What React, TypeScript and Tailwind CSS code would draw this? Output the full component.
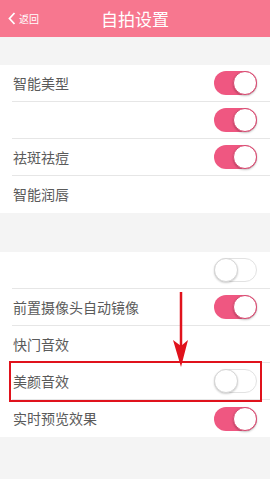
import React from "react";

const font = { fontFamily: '"Noto Sans CJK SC", "Noto Sans", sans-serif' };

function Toggle({ on }: { on: boolean }) {
  return on ? (
    <div className="relative w-[43px] h-[24px] rounded-full bg-[#ef5781]">
      <div className="absolute right-0 top-0 w-[24px] h-[24px] rounded-full bg-white border border-[#d8486f] shadow-[0_1px_2px_rgba(0,0,0,0.25)]" />
    </div>
  ) : (
    <div className="relative w-[43px] h-[24px] rounded-full bg-white border border-[#e2e2e2]">
      <div className="absolute left-[-1px] top-[-1px] w-[24px] h-[24px] rounded-full bg-white border border-[#d6d6d6] shadow-[0_1px_2px_rgba(0,0,0,0.2)]" />
    </div>
  );
}

function Row({ label, toggle, last }: { label?: string; toggle?: boolean | null; last?: boolean }) {
  return (
    <div className="bg-white pl-[12px]">
      <div className={`h-[37px] flex items-center justify-between pr-[13px] ${last ? "" : "border-b border-[#e6e6e6]"}`}>
        <span className="text-[14px] text-[#5a5a5a] pl-[1px]">{label ?? ""}</span>
        {toggle === null || toggle === undefined ? null : <Toggle on={toggle} />}
      </div>
    </div>
  );
}

export default function App() {
  return (
    <div className="w-[270px] h-[479px] bg-[#f4f4f4] relative overflow-hidden" style={font}>
      <div className="h-[37px] bg-[#f7778f] flex items-center relative">
        <div className="flex items-center pl-[8px] text-white">
          <svg width="8" height="13" viewBox="0 0 8 13">
            <path d="M6.5 1 L1.5 6.5 L6.5 12" fill="none" stroke="white" strokeWidth="1.8" />
          </svg>
          <span className="text-[10px] ml-[3px]">返回</span>
        </div>
        <span className="absolute left-0 right-0 text-center text-white text-[17px] pointer-events-none">自拍设置</span>
      </div>
      <div className="h-[28px]" />
      <Row label="智能美型" toggle={true} />
      <Row toggle={true} />
      <Row label="祛斑祛痘" toggle={true} />
      <Row label="智能润唇" last />
      <div className="h-[39px]" />
      <Row toggle={false} />
      <Row label="前置摄像头自动镜像" toggle={true} />
      <Row label="快门音效" />
      <Row label="美颜音效" toggle={false} />
      <Row label="实时预览效果" toggle={true} last />

      <div className="absolute left-[9px] top-[361px] w-[253px] h-[41px] border-2 border-[#e0121c]" />
      <svg className="absolute left-[170px] top-[290px]" width="20" height="80" viewBox="0 0 20 80">
        <line x1="11" y1="2" x2="11" y2="60" stroke="#e0121c" strokeWidth="2.5" />
        <path d="M3 50 L11 77 L18 50 L11 56 Z" fill="#e0121c" />
      </svg>
    </div>
  );
}
